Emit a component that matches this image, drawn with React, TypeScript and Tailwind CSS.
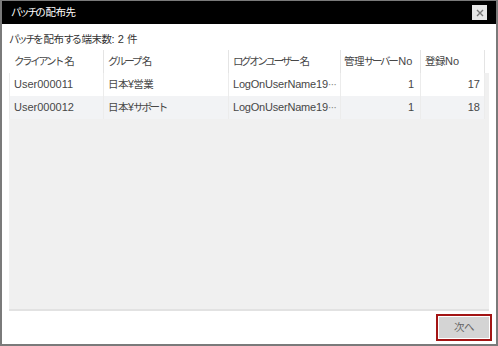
import React from "react";

function J({ t }: { t: string }) {
  const parts = t.match(/([\u3040-\u30ff\u30fc]+|[^\u3040-\u30ff\u30fc]+)/g) || [];
  return (
    <>
      {parts.map((p, i) =>
        /[\u3040-\u30ff]/.test(p) ? (
          <span key={i} className="tracking-[-2.4px] text-[10.5px] pr-[2px]">{p}</span>
        ) : /[\u4e00-\u9fff]/.test(p) ? (
          <span key={i} className="text-[10.5px] tracking-[-0.5px]">{p}</span>
        ) : (
          <span key={i}>{p}</span>
        )
      )}
    </>
  );
}

const rows = [
  { client: "User000011", group: "日本¥営業", user: "LogOnUserName19", srv: "1", no: "17" },
  { client: "User000012", group: "日本¥サポート", user: "LogOnUserName19", srv: "1", no: "18" },
];

export default function App() {
  return (
    <div
      className="w-[498px] h-[346px] bg-[#7a7a7a] pl-[2px] pr-[2px] pb-[2px] pt-[1px] flex flex-col text-[11px] text-[#474747]"
      style={{ fontFamily: '"Liberation Sans", "Noto Sans CJK JP", sans-serif' }}
    >
      <div className="h-[23px] bg-black flex items-center justify-between pl-[9px] pr-[9px] shrink-0">
        <span className="text-white text-[11px] whitespace-nowrap"><J t="パッチの配布先" /></span>
        <div className="w-[15px] h-[15px] bg-[#e6e6e6] flex items-center justify-center">
          <svg width="8" height="8" viewBox="0 0 8 8">
            <path d="M1 1L7 7M7 1L1 7" stroke="#777" strokeWidth="1.4" />
          </svg>
        </div>
      </div>
      <div className="flex-1 bg-white flex flex-col pl-[7px] pr-[4px]">
        <div className="h-[26px] flex items-center pt-[5px] text-[#333] whitespace-nowrap">
          <J t="パッチを配布する端末数" />
          <span>:&nbsp;2&nbsp;</span>
          <J t="件" />
        </div>
        <div className="flex-1 bg-[#f0f0f0] border-b-2 border-[#e2e2e2] flex flex-col mr-[3px]">
          <div className="flex h-[23px] bg-white whitespace-nowrap">
            <div className="w-[95px] pl-[5px] flex items-center border-r border-[#e4e4e4]"><J t="クライアント名" /></div>
            <div className="w-[125px] pl-[4px] flex items-center border-r border-[#e4e4e4]"><J t="グループ名" /></div>
            <div className="w-[112px] pl-[4px] flex items-center border-r border-[#e4e4e4]"><J t="ログオンユーザー名" /></div>
            <div className="w-[80px] pl-[3px] flex items-center border-r border-[#e4e4e4]"><J t="管理サーバー" />No</div>
            <div className="w-[64px] pl-[4px] flex items-center border-r border-[#e4e4e4]"><J t="登録" />No</div>
            <div className="flex-1 bg-white" />
          </div>
          {rows.map((r, i) => (
            <div key={i} className={`flex h-[23px] whitespace-nowrap ${i === 1 ? "bg-[#f2f3f5]" : "bg-white"}`}>
              <div className="w-[95px] pl-[4px] flex items-center border-l border-r border-[#ececec]">{r.client}</div>
              <div className="w-[125px] pl-[4px] flex items-center border-r border-[#ececec]"><J t={r.group} /></div>
              <div className="w-[112px] pl-[4px] flex items-center border-r border-[#ececec] overflow-hidden tracking-[-0.2px]">
                {r.user}<span className="text-[#888] tracking-[-1px]">···</span>
              </div>
              <div className="w-[80px] pr-[6px] flex items-center justify-end border-r border-[#ececec]">{r.srv}</div>
              <div className="w-[64px] pr-[4px] flex items-center justify-end border-r border-[#ececec]">{r.no}</div>
              <div className="flex-1 bg-[#f0f0f0]" />
            </div>
          ))}
        </div>
        <div className="h-[33px] flex items-center justify-end">
          <div className="w-[56px] h-[27px] border-2 border-[#a31414] p-[1px]">
            <div className="w-full h-full bg-[#d4d4d4] flex items-center justify-center text-[#666]"><J t="次" /><J t="へ" /></div>
          </div>
        </div>
      </div>
    </div>
  );
}
